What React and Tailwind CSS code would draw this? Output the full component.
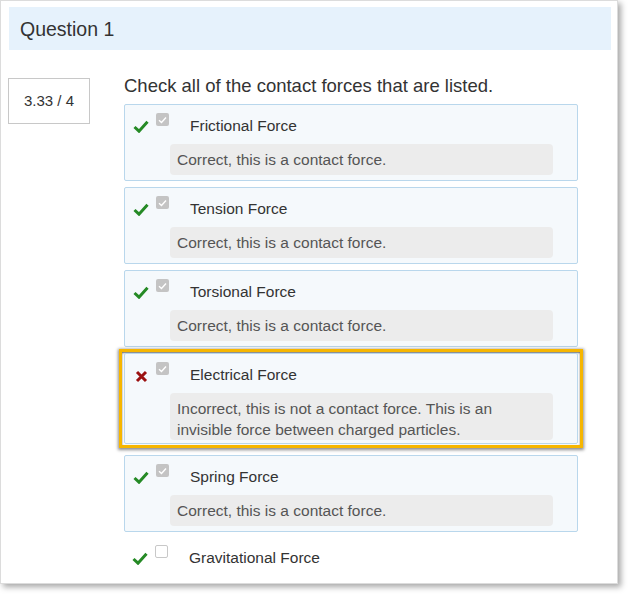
import React from "react";

const Check = () => (
  <svg width="16" height="13" viewBox="0 0 16 13" className="block">
    <path d="M1.5 7 L6 11.2 L14.5 1.8" fill="none" stroke="#258a25" strokeWidth="3" strokeLinecap="butt" strokeLinejoin="miter" />
  </svg>
);

const Cross = () => (
  <svg width="13" height="13" viewBox="0 0 13 13" className="block">
    <path d="M2 2 L11 11 M11 2 L2 11" fill="none" stroke="#9b1111" strokeWidth="3" />
  </svg>
);

const Box = ({ checked }) =>
  checked ? (
    <div className="w-[13px] h-[13px] rounded-[2px] bg-[#c4c4c4] flex items-center justify-center">
      <svg width="9" height="8" viewBox="0 0 9 8">
        <path d="M1 4.2 L3.5 6.5 L8 1.5" fill="none" stroke="#fff" strokeWidth="1.4" />
      </svg>
    </div>
  ) : (
    <div className="w-[13px] h-[13px] rounded-[2px] bg-white border border-[#c8c8c8]" />
  );

const Answer = ({ label, feedback, wrong }) => (
  <div className={"border border-[#b9d7ec] bg-[#f5f9fc] rounded-[2px] pt-[11px] " + (wrong ? "pb-[3px]" : "pb-[5px]")}>
    <div className="flex items-start h-[20px]">
      <div className="w-[31px] pl-[8px] pt-[4px]">{wrong ? <div className="pl-[2px] pt-[1px]"><Cross /></div> : <Check />}</div>
      <div className="w-[34px] -mt-[3px]"><Box checked /></div>
      <div className="text-[15.5px] leading-[20px] text-[#333]">{label}</div>
    </div>
    <div className={"mt-2 ml-[45px] mr-[24px] bg-[#ececec] rounded-[4px] px-[7px] text-[15.5px] leading-[21px] text-[#555] " + (wrong ? "pt-[5px] pb-0" : "py-[5px]")}>
      {feedback}
    </div>
  </div>
);

export default function App() {
  const ok = "Correct, this is a contact force.";
  return (
    <div className="bg-white w-[628px] h-[594px]" style={{ fontFamily: "'Liberation Sans', Arial, sans-serif" }}>
      <div className="w-[618px] h-[584px] bg-white border border-[#dcdcdc] shadow-[3px_3px_6px_rgba(0,0,0,0.35)]">
        <div className="mx-2 mt-[6px] h-[43px] bg-[#e6f2fc] flex items-center pl-[11px] pt-[2px] w-[602px]">
          <span className="text-[19.5px] text-[#333]">Question 1</span>
        </div>
        <div className="flex mt-[27px]">
          <div className="ml-[7px] mt-[1px] w-[82px] h-[46px] border border-[#c8c8c8] flex items-center justify-center text-[15px] text-[#333]">
            3.33 / 4
          </div>
          <div className="ml-[34px] w-[454px] flex flex-col">
            <div className="text-[18.5px] leading-[18px] text-[#333] h-[27px]">Check all of the contact forces that are listed.</div>
            <div className="flex flex-col gap-[6px]">
              <Answer label="Frictional Force" feedback={ok} />
              <Answer label="Tension Force" feedback={ok} />
              <Answer label="Torsional Force" feedback={ok} />
              <div className="-mx-[5px] -mt-[4px] px-[2px] py-[1px] border-[3px] border-[#f6b600] shadow-[0_1px_3px_1px_rgba(0,0,0,0.45),inset_0_1px_2px_rgba(0,0,0,0.6)]">
                <Answer
                  wrong
                  label="Electrical Force"
                  feedback={<>Incorrect, this is not a contact force. This is an<br />invisible force between charged particles.</>}
                />
              </div>
              <div className="mt-[1px]">
                <Answer label="Spring Force" feedback={ok} />
              </div>
            </div>
            <div className="flex items-start h-[20px] mt-[16px]">
              <div className="w-[31px] pl-[8px] pt-[4px]"><Check /></div>
              <div className="w-[34px] -mt-[3px]"><Box /></div>
              <div className="text-[15.5px] leading-[20px] text-[#333]">Gravitational Force</div>
            </div>
          </div>
        </div>
      </div>
    </div>
  );
}
